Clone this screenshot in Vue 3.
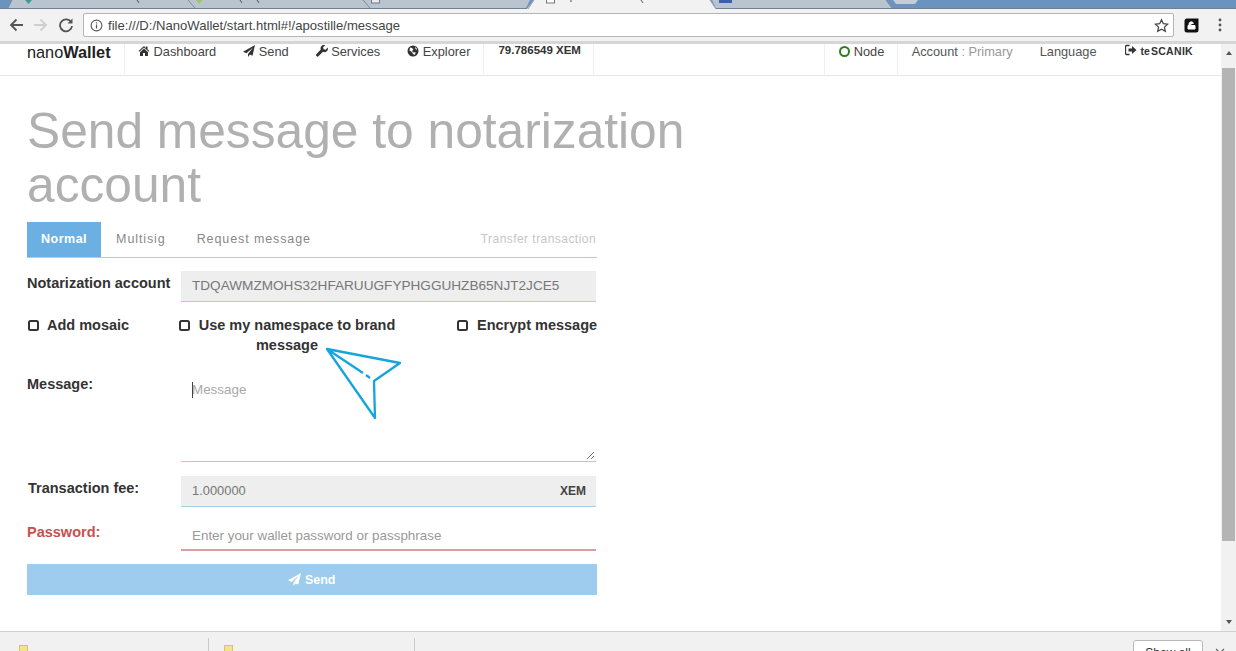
<script setup>
const navItems = [
  { label: 'Dashboard', icon: 'home' },
  { label: 'Send', icon: 'plane' },
  { label: 'Services', icon: 'wrench' },
  { label: 'Explorer', icon: 'globe' },
]
const tabs = ['Normal', 'Multisig', 'Request message']
</script>

<template>
  <div class="screen">
    <div class="tabstrip">
      <svg class="tabs-svg" width="1236" height="9" viewBox="0 0 1236 9">
        <path d="M8 8 L12 0 H530 L526 8 Z" fill="#b9c4cf" />
        <path d="M712 0 H886 L892 8 H716 Z" fill="#b9c4cf" />
        <path d="M0 8.500 H1236" stroke="#6f8198" fill="none" />
        <path d="M8 8 L12 0 M188 0 L195 8 M363 0 L370 8 M886 0 L892 8" stroke="#7d8b9b" fill="none" />
        <path d="M527 9 L534 0 H710 L716 9 Z" fill="#f2f2f2" />
        <path d="M528 9 L534 0 M710 0 L716 9" stroke="#9aa5b1" fill="none" />
        <path d="M893 0 H918 L915 4 H896 Z" fill="#c4cdd8" />
        <path d="M25 0 H32 L28.500 4 Z" fill="#3f9a97" />
        <path d="M196 0 H203 L199 4 Z" fill="#9bc86f" />
        <path d="M137 0 l2 3 M240 0 l2 3 M257 0 l2 3 M641 0 l2 3 M571 0 v2" stroke="#555" fill="none" />
        <rect x="371.500" y="-1" width="8" height="4" fill="#e8eaed" stroke="#778" />
        <rect x="546.500" y="-1" width="8" height="4" fill="#fff" stroke="#778" />
        <rect x="719" y="0" width="13" height="3" fill="#3b5fa8" />
      </svg>
    </div>
    <div class="toolbar">
      <svg class="tool" width="16" height="16" viewBox="0 0 16 16"><path d="M15 8H3M8.500 2.500 3 8l5.500 5.500" fill="none" stroke="#555" stroke-width="1.800" /></svg>
      <svg class="tool" width="16" height="16" viewBox="0 0 16 16"><path d="M1 8h12M7.500 2.500 13 8l-5.500 5.500" fill="none" stroke="#cfcfcf" stroke-width="1.800" /></svg>
      <svg class="tool" width="16" height="16" viewBox="0 0 16 16"><path d="M13.300 5.500A6 6 0 1 0 14 9" fill="none" stroke="#555" stroke-width="1.800" /><path d="M14.500 1.500v5h-5z" fill="#555" /></svg>
      <div class="omnibox">
        <svg width="13" height="13" viewBox="0 0 13 13"><circle cx="6.500" cy="6.500" r="5.400" fill="none" stroke="#555" stroke-width="1.100" /><path d="M6.500 5.600v4M6.500 3.200v1.300" stroke="#555" stroke-width="1.200" /></svg>
        <span class="url">file:///D:/NanoWallet/start.html#!/apostille/message</span>
        <svg class="star" width="15" height="15" viewBox="0 0 24 24"><path d="M12 2.800l2.900 6.300 6.900.8-5.100 4.700 1.400 6.800-6.100-3.500-6.100 3.500 1.400-6.800-5.100-4.700 6.900-.8z" fill="none" stroke="#444" stroke-width="2" /></svg>
      </div>
      <svg class="ext" width="15" height="15" viewBox="0 0 15 15"><path d="M3 0.500H14.500V12a2.500 2.500 0 0 1-2.500 2.500H3A2.500 2.500 0 0 1 .5 12V3A2.500 2.500 0 0 1 3 .5z" fill="#111" /><path d="M4 7.500h7v3.500H4zM5 7.500V6a2.300 2.300 0 0 1 4.500-.5" fill="#fff" stroke="#fff" /></svg>
      <svg class="menu" width="4" height="14" viewBox="0 0 4 14"><circle cx="2" cy="2" r="1.400" fill="#555" /><circle cx="2" cy="7" r="1.400" fill="#555" /><circle cx="2" cy="12" r="1.400" fill="#555" /></svg>
    </div>

    <div class="viewport">
      <div class="page">
        <nav class="navbar">
          <div class="brand">nano<b>Wallet</b></div>
          <ul class="nav">
            <li v-for="item in navItems" :key="item.label">
              <svg v-if="item.icon === 'home'" class="ico" viewBox="0 0 12 12"><path d="M6 1 .5 6l.7.8L6 2.500l4.800 4.300.7-.8L9.500 4.200V1.500H8v1.400zM2 7.200V11h3V8h2v3h3V7.200L6 3.600z" fill="#333" /></svg>
              <svg v-else-if="item.icon === 'plane'" class="ico" viewBox="0 0 12 12"><path d="M12 0 0 6.800l3.400 1.400L10 2.400 5 9v3l1.900-2.400 2.600 1.100z" fill="#333" /></svg>
              <svg v-else-if="item.icon === 'wrench'" class="ico" viewBox="0 0 12 12"><path d="M11.700 2.600 9.600 4.700 7.600 4.200 7.100 2.300 9.200.2A3.400 3.400 0 0 0 4.800 4.600L.5 8.900a1.500 1.500 0 0 0 2.200 2.200L7 6.800a3.400 3.400 0 0 0 4.700-4.200z" fill="#333" /></svg>
              <svg v-else class="ico" viewBox="0 0 12 12"><circle cx="6" cy="6" r="5.500" fill="#333" /><path d="M3 2.500l2 .5 1.500 1.500L5 6l1.500 1.500 2-.5L8 10 6 9 5 7 2.500 5.500zM8 2l1.500 1L10 5 8.500 4z" fill="#fff" /></svg>
              {{ item.label }}
            </li>
          </ul>
          <div class="balance">79.786549 XEM</div>
          <div class="spacer"></div>
          <div class="node"><i class="dot"></i>Node</div>
          <div class="account">Account <span>: Primary</span></div>
          <div class="lang">Language</div>
          <div class="user">
            <svg class="ico" viewBox="0 0 12 12"><path d="M4.500 1.500H1.500a1 1 0 0 0-1 1v7a1 1 0 0 0 1 1h3" fill="none" stroke="#333" stroke-width="1.300" /><path d="M3.500 4.500H7V2l4.500 4L7 10V7.500H3.500z" fill="#333" /></svg>
            <span>te</span><span class="sc">SCANIK</span>
          </div>
        </nav>

        <main class="content">
          <h1>Send message to notarization account</h1>
          <div class="form">
            <div class="tabs">
              <div v-for="(t, i) in tabs" :key="t" class="tab" :class="{ on: i === 0 }">{{ t }}</div>
              <div class="tab-note">Transfer transaction</div>
            </div>

            <div class="row row-acct">
              <label>Notarization account</label>
              <div class="field grey">TDQAWMZMOHS32HFARUUGFYPHGGUHZB65NJT2JCE5</div>
            </div>

            <div class="checks">
              <div class="check c1"><i class="box"></i>Add mosaic</div>
              <div class="check c2"><i class="box"></i>Use my namespace to brand message</div>
              <div class="check c3"><i class="box"></i>Encrypt message</div>
            </div>

            <div class="row row-msg">
              <label>Message:</label>
              <div class="textarea">
                <span class="caret"></span>Message
                <svg class="grip" width="9" height="9" viewBox="0 0 9 9"><path d="M8 1 1 8M8 5 5 8" stroke="#777" /></svg>
              </div>
            </div>

            <div class="row row-fee">
              <label>Transaction fee:</label>
              <div class="field grey fee"><span>1.000000</span><b>XEM</b></div>
            </div>

            <div class="row row-pass">
              <label class="red">Password:</label>
              <div class="field pass">Enter your wallet password or passphrase</div>
            </div>

            <button class="send">
              <svg class="ico send-ico" viewBox="0 0 12 12"><path d="M12 0 0 6.800l3.400 1.400L10 2.400 5 9v3l1.900-2.400 2.600 1.100z" fill="#fff" /></svg>
              Send
            </button>
          </div>
        </main>
      </div>
      <div class="scrollbar">
        <i class="arrow up"></i>
        <div class="thumb"></div>
        <i class="arrow down"></i>
      </div>
      <svg class="annot" width="78" height="74" viewBox="0 0 78 74">
        <path d="M1 2 74 16 48 34 49 71Z M1 2 37 26 M40 28 44 31" fill="none" stroke="#14a5dc" stroke-width="2.300" stroke-linejoin="round" />
      </svg>
    </div>

    <footer class="downloads">
      <div class="dl d1"><i class="file"></i></div>
      <div class="dl d2"><i class="file"></i></div>
      <div class="spacer"></div>
      <div class="showall">Show all</div>
      <svg width="10" height="10" viewBox="0 0 10 10" class="closex"><path d="M1 1l8 8M9 1 1 9" stroke="#666" stroke-width="1.300" /></svg>
    </footer>
  </div>
</template>

<style>
html, body { margin: 0; padding: 0; overflow: hidden; background: #fff; }
</style>

<style scoped>
.screen {
  width: 1236px;
  height: 651px;
  display: flex;
  flex-direction: column;
  overflow: hidden;
  font-family: "Liberation Sans", Arial, sans-serif;
  color: #333;
  background: #fff;
}
.tabstrip { height: 9px; background: #6a93bf; flex: none; }
.tabs-svg { display: block; }
.toolbar {
  height: 35px;
  flex: none;
  background: #f2f2f2;
  display: flex;
  align-items: center;
  padding: 0 8px;
  box-sizing: border-box;
  border-bottom: 3px solid #d6d6d6;
}
.tool { margin-right: 9px; flex: none; }
.omnibox {
  width: 1091px;
  height: 24px;
  background: #fff;
  border: 1px solid #b5b5b5;
  border-radius: 2px;
  box-sizing: border-box;
  display: flex;
  align-items: center;
  padding: 0 4px 0 6px;
  gap: 5px;
}
.url { font-size: 13.100px; color: #444; flex: 1; }
.ext { margin-left: 10px; flex: none; }
.menu { margin-left: 19px; flex: none; }
.viewport { flex: 1; display: flex; position: relative; min-height: 0; }
.page { flex: 1; min-width: 0; }
.navbar {
  height: 31px;
  display: flex;
  align-items: stretch;
  border-bottom: 1px solid #e7e7e7;
  padding-left: 27px;
  font-size: 12.800px;
  line-height: 15px;
}
.brand { width: 98px; font-size: 16.300px; color: #222; line-height: 16px; border-right: 1px solid #f0f0f0; box-sizing: border-box; flex: none; }
.brand b { font-weight: 700; }
.nav { display: flex; list-style: none; margin: 0; padding: 0 0 0 13px; gap: 27px; }
.nav li { white-space: nowrap; color: #444; }
.ico { width: 12px; height: 12px; vertical-align: -1px; }
.balance {
  margin-left: 13px;
  padding: 0 14px;
  width: 111px;
  box-sizing: border-box;
  border-left: 1px solid #f0f0f0;
  border-right: 1px solid #f0f0f0;
  font-size: 11.500px;
  font-weight: 700;
  line-height: 13px;
  color: #333;
  white-space: nowrap;
}
.spacer { flex: 1; }
.node {
  width: 74px;
  box-sizing: border-box;
  padding-left: 14px;
  border-left: 1px solid #f0f0f0;
  border-right: 1px solid #f0f0f0;
  color: #444;
  display: flex;
  align-items: flex-start;
}
.dot {
  width: 11px;
  height: 11px;
  box-sizing: border-box;
  border: 2px solid #2e7d1e;
  border-radius: 50%;
  margin: 2px 4px 0 0;
}
.account { margin-left: 14px; color: #555; white-space: nowrap; }
.account span { color: #999; }
.lang { margin-left: 27px; color: #555; }
.user { margin-left: 28px; margin-right: 28px; font-size: 10.500px; font-weight: 700; color: #333; white-space: nowrap; }
.user .ico { margin-right: 4px; }
.sc { letter-spacing: .3px; margin-left: 1px; }
.content { padding: 0 0 0 27px; }
h1 {
  margin: 28px 0 0;
  width: 700px;
  font-size: 49.700px;
  font-weight: 400;
  line-height: 54px;
  color: #b0b0b0;
}
.form { width: 570px; margin-top: 10px; }
.tabs {
  display: flex;
  align-items: flex-start;
  height: 35px;
  border-bottom: 1px solid #a9cfe4;
  font-size: 12.500px;
  letter-spacing: .9px;
  color: #888;
}
.tab { padding: 0 16px 0 15px; height: 35px; line-height: 34px; }
.tab.on { background: #6cb0e3; color: #fff; font-weight: 700; padding: 0 14px; letter-spacing: .5px; }
.tab-note { margin-left: auto; margin-right: 1px; color: #c6c6c6; font-size: 12px; letter-spacing: .45px; line-height: 34px; }
.row { display: flex; }
.row label { width: 154px; flex: none; font-size: 14.500px; font-weight: 700; color: #333; box-sizing: border-box; }
.row-acct { margin-top: 13px; }
.row-acct label { padding-top: 4px; }
.field {
  flex: 1;
  box-sizing: border-box;
  height: 31px;
  line-height: 30px;
  padding: 0 11px;
  font-size: 13.600px;
  color: #777;
  margin-right: 1px;
}
.grey { background: #eee; border-bottom: 1px solid #a9cfe4; }
.checks { height: 48px; margin-top: 13px; font-size: 14.500px; font-weight: 700; color: #333; display: flex; line-height: 20px; }
.c1 { width: 150px; padding-left: 1px; flex: none; box-sizing: border-box; }
.c2 { width: 220px; text-align: center; flex: none; }
.c3 { margin-left: 60px; white-space: nowrap; flex: none; }
.box {
  display: inline-block;
  box-sizing: border-box;
  width: 11px;
  height: 11px;
  margin-right: 9px;
  vertical-align: -1px;
  border: 2px solid #333;
  border-radius: 2.500px;
}
.c1 .box { margin-right: 8px; }
.row-msg { margin-top: 7px; }
.row-msg label { padding-top: 4px; line-height: 20px; }
.textarea {
  position: relative;
  flex: 1;
  height: 92px;
  margin-right: 1px;
  padding: 10px 11px;
  box-sizing: border-box;
  border-bottom: 1px solid #a9cfe4;
  font-size: 13.400px;
  line-height: 20px;
  color: #a8a8a8;
}
.caret { position: absolute; left: 11px; top: 12px; width: 1px; height: 16px; background: #444; }
.grip { position: absolute; right: 1px; bottom: 1px; }
.row-fee { margin-top: 14px; }
.row-fee label { padding: 0 0 0 1px; line-height: 24px; }
.fee { display: flex; justify-content: space-between; padding-right: 10px; font-size: 12.900px; }
.fee b { font-size: 12px; color: #444; }
.row-pass { margin-top: 13px; }
.row-pass label { line-height: 24px; }
.red { color: #c9504c !important; }
.pass { border-bottom: 2px solid #d6a09e; color: #999; font-size: 13.400px; line-height: 32px; }
.send {
  display: block;
  width: 570px;
  height: 31px;
  margin-top: 13px;
  border: 0;
  padding: 0;
  background: #9dccee;
  color: #fff;
  font: 700 12.500px "Liberation Sans", Arial, sans-serif;
}
.send-ico { width: 13px; height: 13px; vertical-align: -2px; }
.scrollbar {
  width: 15px;
  flex: none;
  background: #f1f1f1;
  position: relative;
  display: flex;
  flex-direction: column;
  align-items: center;
}
.thumb { width: 13px; height: 473px; margin-top: 24px; background: #b4b4b4; }
.arrow { position: absolute; width: 0; height: 0; border-left: 3px solid transparent; border-right: 3px solid transparent; }
.up { top: 7px; border-bottom: 4px solid #555; }
.down { bottom: 7px; border-top: 4px solid #555; }
.annot { position: absolute; left: 326px; top: 303px; }
.downloads {
  height: 20px;
  flex: none;
  background: #f1f1f1;
  border-top: 1px solid #d0d0d0;
  display: flex;
  padding-top: 6px;
  box-sizing: border-box;
}
.dl { height: 14px; border-right: 1px solid #c8c8c8; }
.d1 { padding-left: 19px; width: 189px; }
.d2 { padding-left: 15px; width: 190px; }
.file { display: block; width: 9px; height: 9px; margin-top: 7px; background: #f3e28e; border: 1px solid #d9c65a; box-sizing: border-box; }
.showall {
  width: 70px;
  height: 20px;
  margin-top: 2px;
  background: #fff;
  border: 1px solid #b8b8b8;
  border-radius: 3px;
  font-size: 12px;
  line-height: 24px;
  text-align: center;
  box-sizing: border-box;
  color: #333;
  flex: none;
}
.closex { margin: 10px 11px 0 12px; flex: none; }
</style>
